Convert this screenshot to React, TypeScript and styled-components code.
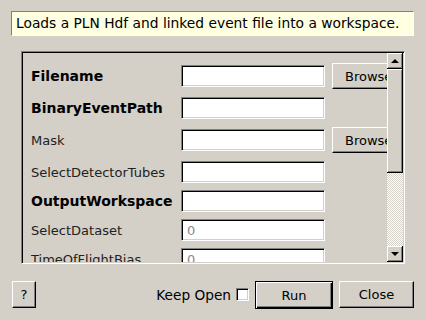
import styled, { createGlobalStyle } from "styled-components";

const GlobalStyle = createGlobalStyle`
  body {
    margin: 0;
    background: #d4d0c8;
    font-family: "DejaVu Sans", "Liberation Sans", sans-serif;
    font-size: 13px;
    color: #000;
  }
`;

const Dialog = styled.div`
  width: 426px;
  height: 320px;
  box-sizing: border-box;
  padding: 11px 12px 0 11px;
  display: flex;
  flex-direction: column;
  overflow: hidden;
`;

const Description = styled.div`
  height: 25px;
  box-sizing: border-box;
  padding-left: 4px;
  line-height: 23px;
  font-size: 13.8px;
  background: #ffffe1;
  border: 1px solid;
  border-color: #808080 #ffffff #ffffff #808080;
  white-space: nowrap;
  overflow: hidden;
`;

const ScrollFrame = styled.div`
  margin: 15px 9px 0 10px;
  height: 213px;
  box-sizing: border-box;
  border: 1px solid;
  border-color: #808080 #ffffff #ffffff #808080;
  box-shadow: inset 1px 1px #000, inset -1px -1px #d4d0c8;
  padding: 1px;
  display: flex;
`;

const Viewport = styled.div`
  flex: 1;
  overflow: hidden;
  padding: 10px 0 0 8px;
`;

const Row = styled.div<{ $h: number; $gap: number }>`
  display: flex;
  align-items: center;
  height: ${(p) => p.$h}px;
  margin-bottom: ${(p) => p.$gap}px;
`;

const Label = styled.div<{ $bold?: boolean }>`
  width: 150px;
  flex-shrink: 0;
  font-weight: ${(p) => (p.$bold ? "bold" : "normal")};
  font-size: ${(p) => (p.$bold ? "14px" : "13px")};
  color: ${(p) => (p.$bold ? "#000" : "#222")};
  white-space: nowrap;
`;

const TextInput = styled.input`
  width: 144px;
  height: 22px;
  flex-shrink: 0;
  box-sizing: border-box;
  margin: 0;
  padding: 0 0 0 5px;
  font: inherit;
  background: #fff;
  border: 1px solid;
  border-color: #808080 #ffffff #ffffff #808080;
  box-shadow: inset 1px 1px #000, inset -1px -1px #d4d0c8;
  outline: none;

  &::placeholder {
    color: #8a8a8a;
  }
`;

const Button = styled.button<{ $w: number; $h: number; $default?: boolean }>`
  width: ${(p) => p.$w}px;
  height: ${(p) => p.$h}px;
  flex-shrink: 0;
  box-sizing: border-box;
  margin: 0;
  padding: 0;
  font: inherit;
  color: #000;
  background: #d4d0c8;
  border: 1px solid;
  border-color: ${(p) => (p.$default ? "#000" : "#fff #000 #000 #fff")};
  box-shadow: ${(p) =>
    p.$default
      ? "inset 1px 1px #fff, inset -1px -1px #000, inset -2px -2px #808080"
      : "inset -1px -1px #808080"};
`;

const BrowseButton = styled(Button)`
  margin-left: 7px;
  text-align: left;
  padding-left: 12px;
`;

const CloseButton = styled(Button)`
  margin-left: 6px;
`;

const ScrollBar = styled.div`
  width: 16px;
  display: flex;
  flex-direction: column;
`;

const ScrollPiece = styled.div<{ $h?: number }>`
  height: ${(p) => (p.$h ? `${p.$h}px` : "16px")};
  box-sizing: border-box;
  background: #d4d0c8;
  border-right: 1px solid #000;
  border-bottom: 1px solid #000;
  box-shadow: inset 1px 1px #fff, inset -1px -1px #808080;
  display: flex;
  align-items: center;
  justify-content: center;
`;

const Arrow = styled.div<{ $up?: boolean }>`
  width: 0;
  height: 0;
  border-left: 4px solid transparent;
  border-right: 4px solid transparent;
  ${(p) =>
    p.$up ? "border-bottom: 4px solid #000;" : "border-top: 4px solid #000;"}
`;

const Track = styled.div`
  flex: 1;
  background: repeating-conic-gradient(#ffffff 0 25%, #d4d0c8 0 50%) 0 0 / 2px
    2px;
`;

const BottomBar = styled.div`
  margin-top: 17px;
  display: flex;
  align-items: flex-start;
  padding-left: 1px;
`;

const Spacer = styled.div`
  flex: 1;
`;

const KeepOpen = styled.label`
  display: flex;
  align-items: center;
  height: 27px;
  margin-right: 6px;
  gap: 5px;
  font-size: 13.7px;
`;

const CheckBox = styled.span`
  width: 13px;
  height: 13px;
  box-sizing: border-box;
  background: #fff;
  border: 1px solid;
  border-color: #808080 #ffffff #ffffff #808080;
  box-shadow: inset 1px 1px #000, inset -1px -1px #d4d0c8;
`;

const fields = [
  { name: "Filename", bold: true, browse: true, h: 26, gap: 8 },
  { name: "BinaryEventPath", bold: true, h: 22, gap: 8 },
  { name: "Mask", browse: true, h: 26, gap: 8 },
  { name: "SelectDetectorTubes", h: 22, gap: 7 },
  { name: "OutputWorkspace", bold: true, h: 22, gap: 7 },
  { name: "SelectDataset", placeholder: "0", h: 22, gap: 7 },
  { name: "TimeOfFlightBias", placeholder: "0", h: 22, gap: 7 },
  { name: "SampleAperture", placeholder: "0", h: 22, gap: 7 },
];

const App = () => {
  return (
    <>
      <GlobalStyle />
      <Dialog>
        <Description>
          Loads a PLN Hdf and linked event file into a workspace.
        </Description>

        <ScrollFrame>
          <Viewport>
            {fields.map((f) => (
              <Row key={f.name} $h={f.h} $gap={f.gap}>
                <Label $bold={f.bold}>{f.name}</Label>
                <TextInput placeholder={f.placeholder} />
                {f.browse && (
                  <BrowseButton $w={75} $h={26}>
                    Browse
                  </BrowseButton>
                )}
              </Row>
            ))}
          </Viewport>
          <ScrollBar>
            <ScrollPiece>
              <Arrow $up />
            </ScrollPiece>
            <ScrollPiece $h={104} />
            <Track />
            <ScrollPiece>
              <Arrow />
            </ScrollPiece>
          </ScrollBar>
        </ScrollFrame>

        <BottomBar>
          <Button $w={24} $h={27}>
            ?
          </Button>
          <Spacer />
          <KeepOpen>
            Keep Open
            <CheckBox />
          </KeepOpen>
          <Button $w={78} $h={28} $default>
            Run
          </Button>
          <CloseButton $w={75} $h={27}>
            Close
          </CloseButton>
        </BottomBar>
      </Dialog>
    </>
  );
};

export default App;
